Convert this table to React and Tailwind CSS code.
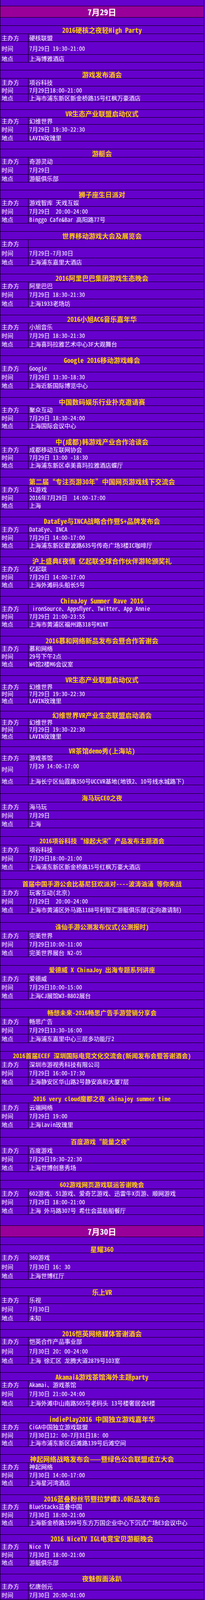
import React from 'react';

// row heights (px, bottom border included)
const H = {
  16: 'h-[16px]',
  17: 'h-[17px]',
  18: 'h-[18px]',
  19: 'h-[19px]',
  20: 'h-[20px]',
  21: 'h-[21px]',
  22: 'h-[22px]',
  23: 'h-[23px]',
  24: 'h-[24px]',
  25: 'h-[25px]',
  26: 'h-[26px]',
  27: 'h-[27px]',
  28: 'h-[28px]',
  29: 'h-[29px]',
  33: 'h-[33px]',
  40: 'h-[40px]',
};

const T = { 16: 'text-[16px]', 17: 'text-[17px]' };

const U22 = [22, 22, 22, 22, 22];
const U20 = [20, 20, 20, 20, 20];

// [标题, 主办方, 时间, 地点, 行高, 标题字号]
const day29 = [
  ['2016硬核之夜轻High Party', '硬核联盟', '7月29日 19:30－21:00', '上海博雅酒店', [21, 20, 33, 20, 20], 17],
  ['游戏发布酒会', '项谷科技', '7月29日18:00-21:00', '上海市浦东新区新金桥路15号红枫万豪酒店', [21, 20, 20, 20, 20], 17],
  ['VR生态产业联盟启动仪式', '幻维世界', '7月29日 19:30-22:30', 'LAVIN玫瑰里', [20, 18, 24, 19, 20], 17],
  ['游艇会', '奇游灵动', '7月29日', '游艇俱乐部', [21, 19, 25, 20, 20], 17],
  ['狮子座生日派对', '游戏智库 天戏互娱', '7月29日  20:00-24:00', 'Binggo Cafe&Bar 高阳路77号', [22, 20, 23, 20, 21], 17],
  ['世界移动游戏大会及展览会', '', '7月29日-7月30日', '上海浦东嘉里大酒店', [21, 20, 27, 20, 21], 17],
  ['2016阿里巴巴集团游戏生态晚会', '阿里巴巴', '7月29日 18:30-21:30', '上海1933老场坊', [20, 20, 24, 21, 20], 17],
  ['2016小旭ACG音乐嘉年华', '小旭音乐', '7月29日 18:30-21:30', '上海喜玛拉雅艺术中心3F大观舞台', [20, 20, 24, 20, 20], 17],
  ['Google 2016移动游戏峰会', 'Google', '7月29日 13:30-18:30', '上海近新国际博览中心', [21, 21, 24, 20, 21], 17],
  ['中国数码娱乐行业扑克邀请赛', '聚众互动', '7月29日 18:30-24:00', '上海国际会议中心', [21, 20, 21, 20, 20], 17],
  ['中（成都）韩游戏产业合作洽谈会', '成都移动互联网协会', '7月29日 13:00 －18:30', '上海浦东新区卓美喜玛拉雅酒店蝶厅', [21, 20, 20, 20, 21], 17],
  ['第二届“专注页游30年”中国网页游戏线下交流会', '51游戏', '2016年7月29日　 14:00-17:00', '上海', [21, 20, 21, 20, 20], 17],
  ['DataEye与INCA战略合作暨S+品牌发布会', 'DataEye、INCA', '7月29日 14:00-17:00', '上海浦东新区碧波路635号传奇广场3楼IC咖啡厅', [20, 21, 21, 20, 20], 17],
  ['沪上盛典E夜情 亿起联全球合作伙伴游轮颁奖礼', '亿起联', '7月29日 14:00-17:00', '上海外滩码头船长5号', [20, 20, 21, 20, 20], 17],
  ['ChinaJoy Summer Rave 2016', ' ironSource、Appsflyer、Twitter、App Annie', '7月29日 21:00-23:55', '上海市黄浦区福州路318号M1NT', [21, 20, 20, 20, 21], 17],
  ['2016慕和网络新品发布会暨合作答谢会', '慕和网络', '29号下午2点', 'W4馆2楼M6会议室', [21, 20, 20, 20, 20], 17],
  ['VR生态产业联盟启动仪式', '幻维世界', '7月29日 19:30-22:30', 'LAVIN玫瑰里', [19, 18, 18, 18, 18], 17],
  ['幻维世界VR产业生态联盟启动酒会', '幻维世界', '7月29日 19:30-22:30', 'LAVIN玫瑰里', [19, 18, 18, 18, 18], 17],
  ['VR茶馆demo秀（上海站）', '游戏茶馆', '7月29 14:00-17:00\n ', '上海长宁区仙霞路350号UCCVR基地（地铁2、10号线水城路下）', [19, 18, 40, 21, 22], 17],
  ['海马玩CEO之夜', '海马玩', '7月29日', '上海', U22, 16],
  ['2016项谷科技“缘起大宋”产品发布主题酒会', '项谷科技', '7月29日18:00-21:00', '上海浦东新区新金桥路15号红枫万豪大酒店', U22, 16],
  ['首届中国手游公会比基尼狂欢派对----波涛汹涌　等你来战', '玩客互动（北京）', '7月29日  20:00-24:00', '上海市黄浦区外马路1188号利智汇游艇俱乐部（定向邀请制）', U22, 16],
  ['诛仙手游公测发布仪式（公测报时）', '完美世界', '7月29日10:00-11:00', '完美世界展台 N2-05', U22, 16],
  ['爱德威 X ChinaJoy 出海专题系列讲座', '爱德威', '7月29日10:00-15:00', '上海CJ展馆W3-B802展台', U22, 16],
  ['畅想未来-2016畅思广告手游营销分享会', '畅思广告', '7月29日13:30-16:00', '上海浦东嘉里中心三层多功能厅2', U22, 16],
  ['2016首届ECEF 深圳国际电竞文化交流会（新闻发布会暨答谢酒会）', '深圳市游视秀科技有限公司', '7月29日 16:00-17:30', '上海静安区华山路2号静安高和大厦7层', U22, 16],
  ['2016 very cloud魔都之夜 chinajoy summer time', '云端网络', '7月29日 19:00', '上海lavin玫瑰里', U22, 16],
  ['百度游戏“能量之夜”', '百度游戏', '7月29日19:30-22:30', '上海世博创意秀场', U22, 16],
  ['602游戏网页游戏联运答谢晚会', '602游戏、51游戏、爱奇艺游戏、迅雷牛X页游、顺网游戏', '7月29日 18:00-21:00', '上海 外马路307号 希仕会蓝舫船餐厅', [22, 22, 22, 22, 28], 16],
];

const day30 = [
  ['星耀360', '360游戏', '7月30日 16：30', '上海世博红厅', [21, 21, 27, 20, 21], 17],
  ['乐上VR', '乐视', '7月30日', '未知', [21, 20, 26, 20, 20], 17],
  ['2016恺英网络媒体答谢酒会', '恺英合作产品事业部', '7月30日 20：00-24:00', '上海 徐汇区 龙腾大道2879号103室', [20, 20, 29, 20, 21], 17],
  ['Akamai&游戏茶馆海外主题party', 'Akamai、游戏茶馆', '7月30日 21:00-24:00', '上海外滩中山南路505号老码头 13号楼奢居会6楼', [21, 19, 28, 20, 20], 17],
  ['indiePlay2016 中国独立游戏嘉年华', 'CiGA中国独立游戏联盟', '7月30日12：00-7月31日18：00', '上海市浦东新区后滩路139号后滩空间', [21, 20, 21, 20, 20], 17],
  ['神起网络战略发布会——暨绿色公会联盟成立大会', '神起网络', '7月30日 14:00-17:00', '上海星河湾酒店', [21, 20, 21, 20, 21], 17],
  ['2016蓝叠粉丝节暨拉梦蝶3.0新品发布会', 'BlueStacks蓝叠中国', '7月30日 18:00-21:00', '上海新金桥路1599号东方万国企业中心下沉式广场E3会议中心', [20, 20, 21, 20, 21], 17],
  ['2016 NiceTV IGL电竞宝贝游艇晚会', 'Nice TV', '7月30日 18:00-21:00', '游艇俱乐部', [20, 20, 21, 20, 20], 17],
  ['夜魅假面泳趴', '忆唐创元', '7月30日 20:00-01:00', '上海中山路1029号幸福码头', [21, 20, 24, 20, 20], 17],
  ['第二届“专注页游30年”中国网页游戏线下交流会', '51游戏', '7月30日', '上海', U20, 16],
  ['Unity官方认证考试', 'Unity', '7月30日 10:00-11:30', '上海普陀区真北路958号天地科技广场2号楼6楼', U20, 16],
  ['CGP中国游戏行业扑克锦标赛决赛', '上海蓝天经济城', '7月30日14:00-20:00', '上海南翔银翔路655号蓝天创业广场3楼', U20, 16],
  ['凯撒股份“悦享盛夏”晚宴', '凯撒股份', '7月30日17:30', '上海黄浦区中山东一路32号半岛酒店乐士文厅', U20, 16],
  ['网红夜 泡沫之夏 2016艾德思奇狂欢Party', '艾德思奇', '7月30日20:00', '上海黄浦区中山东二路22号华盛会馆', U20, 16],
  ['全球电子竞技峰会', 'ChinaJoy', '7月30日 9:30-17:00', '上海浦东嘉里酒店三层上海大宴会厅3', U20, 16],
  ['2016数字娱乐产业应用峰会暨中国数字娱乐联盟启动仪式', '中国数字娱乐联盟、中韩文化产业促进中心', '7月30日14:00-19:00', '上海浦东新区梅花路1108号卓美亚喜马拉雅酒店6楼 蝶 宴会厅', [20, 20, 20, 20, 17], 16],
];

function Blank({ h }) {
  return <div className={`${H[h]} border-b border-black`} />;
}

function DateRow({ text }) {
  return (
    <div className="h-[29px] border-b border-black bg-[#990099] flex items-center justify-center text-[21px] font-bold leading-[20px] text-white">
      {text}
    </div>
  );
}

function InfoRow({ label, value, h }) {
  return (
    <div className={`${H[h]} flex border-b border-black`}>
      <div className="w-[72px] shrink-0 border-r border-black pl-[3px] flex items-center">{label}</div>
      <div className="flex-1 min-w-0 pl-[2px] flex items-center whitespace-pre">{value}</div>
    </div>
  );
}

function Event({ ev }) {
  const [title, org, time, place, hs, ts] = ev;
  return (
    <>
      <div className={`${H[hs[0]]} ${T[ts]} border-b border-black flex items-center justify-center font-bold text-[#ffcc00] leading-[17px] whitespace-pre`}>
        {title}
      </div>
      <InfoRow label="主办方" value={org} h={hs[1]} />
      <InfoRow label="时间" value={time} h={hs[2]} />
      <InfoRow label="地点" value={place} h={hs[3]} />
      <Blank h={hs[4]} />
    </>
  );
}

export default function App() {
  return (
    <div className="bg-[#6600cc]">
      <div className="w-[522px] border-x border-black bg-[#6600cc] text-white text-[15px] leading-[17px] font-['Noto_Sans_CJK_SC','Liberation_Sans',sans-serif] [font-feature-settings:'hwid']">
        <Blank h={16} />
        <DateRow text="7月29日" />
        <Blank h={21} />
        {day29.map((ev, i) => (
          <Event key={'a' + i} ev={ev} />
        ))}
        <DateRow text="7月30日" />
        <Blank h={20} />
        {day30.map((ev, i) => (
          <Event key={'b' + i} ev={ev} />
        ))}
      </div>
    </div>
  );
}
